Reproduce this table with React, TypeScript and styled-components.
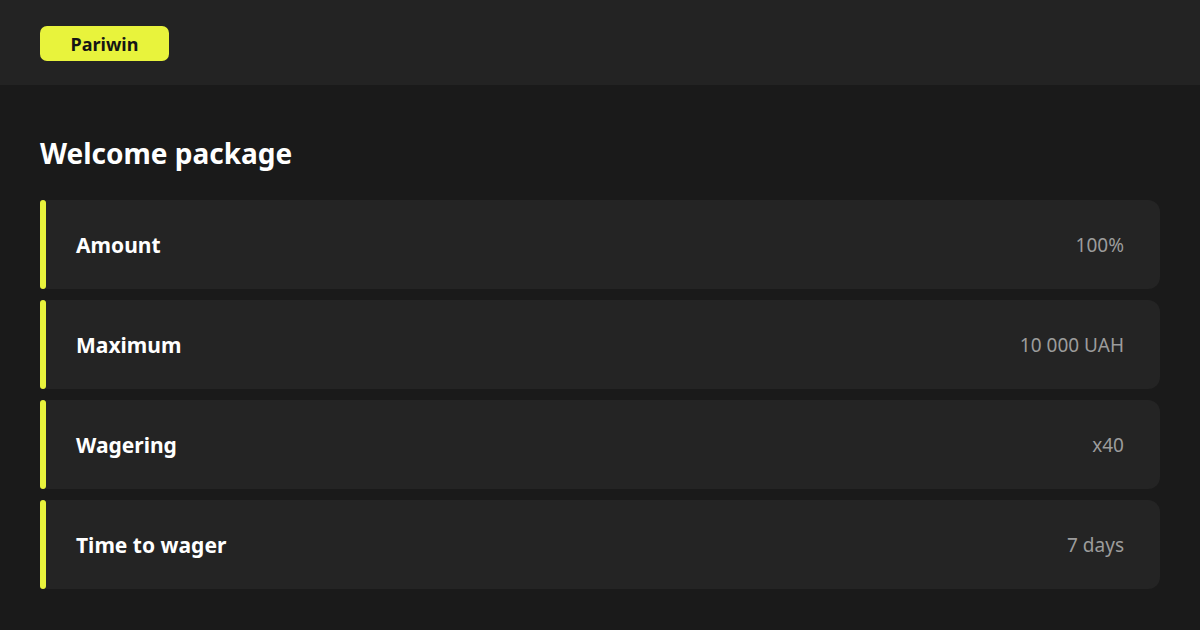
import React from "react";
import styled, { createGlobalStyle } from "styled-components";

const Global = createGlobalStyle`
  html, body { margin: 0; padding: 0; background: #1a1a1a; }
  body { font-family: "Noto Sans", "Open Sans", sans-serif; }
`;

const Page = styled.div`
  width: 1200px;
  height: 630px;
  background: #1a1a1a;
  display: flex;
  flex-direction: column;
  overflow: hidden;
`;

const Header = styled.header`
  height: 85px;
  background: #232323;
  display: flex;
  align-items: center;
  padding: 2px 40px 0;
  box-sizing: border-box;
`;

const Badge = styled.div`
  width: 129px;
  height: 35px;
  border-radius: 7px;
  background: #e8f33c;
  color: #151515;
  font-weight: 700;
  font-size: 18px;
  display: flex;
  align-items: center;
  justify-content: center;
  box-sizing: border-box;
`;

const Main = styled.main`
  padding: 48px 40px 0;
  display: flex;
  flex-direction: column;
`;

const Title = styled.h1`
  margin: 0 0 27px;
  color: #ffffff;
  font-size: 28px;
  line-height: 40px;
  font-weight: 700;
`;

const List = styled.div`
  display: flex;
  flex-direction: column;
  gap: 11px;
`;

const Row = styled.div`
  display: flex;
  height: 89px;
`;

const Accent = styled.div`
  width: 6px;
  background: #e8f33c;
  border-radius: 3px;
  flex-shrink: 0;
`;

const RowBody = styled.div`
  flex: 1;
  background: #242424;
  border-radius: 0 12px 12px 0;
  display: flex;
  align-items: center;
  justify-content: space-between;
  padding: 0 36px 0 30px;
`;

const Label = styled.span`
  color: #ffffff;
  font-size: 21px;
  font-weight: 700;
`;

const Value = styled.span`
  color: #9c9c9c;
  font-size: 19px;
  font-weight: 400;
`;

const rows = [
  ["Amount", "100%"],
  ["Maximum", "10 000 UAH"],
  ["Wagering", "x40"],
  ["Time to wager", "7 days"],
];

export default function App() {
  return (
    <Page>
      <Global />
      <Header>
        <Badge>Pariwin</Badge>
      </Header>
      <Main>
        <Title>Welcome package</Title>
        <List>
          {rows.map(([l, v]) => (
            <Row key={l}>
              <Accent />
              <RowBody>
                <Label>{l}</Label>
                <Value>{v}</Value>
              </RowBody>
            </Row>
          ))}
        </List>
      </Main>
    </Page>
  );
}
